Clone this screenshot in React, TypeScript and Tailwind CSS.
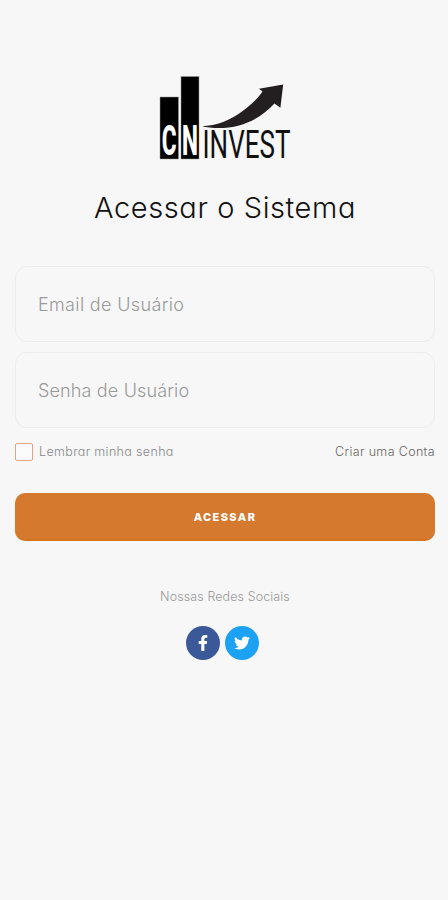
import React, { useState } from 'react';
import { FaFacebookF, FaTwitter } from 'react-icons/fa';

function Logo() {
  return (
    <svg width="150" height="100" viewBox="150 75 150 100" className="shrink-0 overflow-visible" role="img" aria-label="CN Invest">
      <rect x="160" y="97" width="18.5" height="62" fill="#000" stroke="#999" strokeWidth="0.5" />
      <rect x="181" y="76.5" width="18" height="82.5" fill="#000" stroke="#999" strokeWidth="0.5" />
      <path
        d="M202 126.2C216 126 231 120 242 111.5C251 105 258 98 262.5 91.5L259 88.8L283.2 84.6L280.4 107.8L274.5 103.5C263 116 251 122 239 125.5C226 129 211 128.5 202 126.2Z"
        fill="#231f20"
      />
      <g fontFamily="Roboto, 'Liberation Sans', sans-serif">
        <text transform="translate(161.8 155.2) scale(0.57 1)" fontSize="42" fontWeight="800" fill="#fff" textLength="26" lengthAdjust="spacingAndGlyphs">
          C
        </text>
        <text transform="translate(181.9 155.2) scale(0.57 1)" fontSize="42" fontWeight="800" fill="#fff" textLength="28" lengthAdjust="spacingAndGlyphs">
          N
        </text>
        <text x="202.5" y="158.3" fontSize="38" fill="#111" textLength="88" lengthAdjust="spacingAndGlyphs">
          INVEST
        </text>
      </g>
    </svg>
  );
}

interface FieldProps {
  type: string;
  placeholder: string;
  className?: string;
}

function Field({ type, placeholder, className = '' }: FieldProps) {
  return (
    <input
      type={type}
      placeholder={placeholder}
      className={`block h-[76px] w-full rounded-xl border border-[#ededed] bg-[#f7f7f7] px-[22px] text-[18px] font-light text-gray-700 outline-none placeholder:text-[#999] ${className}`}
    />
  );
}

export default function App() {
  const [remember, setRemember] = useState(false);

  return (
    <main className="flex min-h-screen flex-col items-center bg-[#f7f7f7] pt-[75px] pr-[13px] pl-[15px] font-[Inter,sans-serif]">
      <Logo />

      <h1 className="mt-[13px] text-[29px] leading-10 font-light tracking-[0.6px] whitespace-nowrap text-[#111] [font-feature-settings:'cv11']">
        Acessar o Sistema
      </h1>

      <form className="mt-[38px] flex w-full flex-col" onSubmit={e => e.preventDefault()}>
        {/* Credenciais */}
        <div className="flex flex-col gap-[10px]">
          <Field type="email" placeholder="Email de Usuário" className="tracking-[0.35px]" />
          <Field type="password" placeholder="Senha de Usuário" className="tracking-[0.15px]" />
        </div>

        <div className="mt-[14px] flex h-5 items-center justify-between text-[12.5px] font-light">
          <label className="flex items-center gap-[6px] text-[#888] [font-feature-settings:'cv11']">
            <input
              type="checkbox"
              checked={remember}
              onChange={e => setRemember(e.target.checked)}
              className="size-[18px] appearance-none rounded-[2px] border border-[#e2a284] bg-[#fbfbfb] checked:bg-[#d4792e]"
            />
            <span className="tracking-[0.35px]">Lembrar minha senha</span>
          </label>
          <a href="#" className="tracking-[0.35px] text-[#666]">Criar uma Conta</a>
        </div>

        <button
          type="submit"
          className="mt-[31px] h-12 w-full rounded-[10px] border-b-2 border-[#d2741c] bg-[#d4792e] pt-0.5 text-[11px] font-extrabold tracking-[1.4px] text-white"
        >
          ACESSAR
        </button>
      </form>

      {/* Redes sociais */}
      <p className="mt-[46px] text-[12.5px] leading-5 font-light tracking-[0.1px] text-[#999]">Nossas Redes Sociais</p>
      <div className="mt-[19px] flex gap-[5px] pr-[6px]">
        <a href="#" aria-label="Facebook" className="flex size-[34px] items-center justify-center rounded-full bg-[#3b5998] text-white">
          <FaFacebookF size={16} />
        </a>
        <a href="#" aria-label="Twitter" className="flex size-[34px] items-center justify-center rounded-full bg-[#1da1f2] text-white">
          <FaTwitter size={16} />
        </a>
      </div>
    </main>
  );
}
